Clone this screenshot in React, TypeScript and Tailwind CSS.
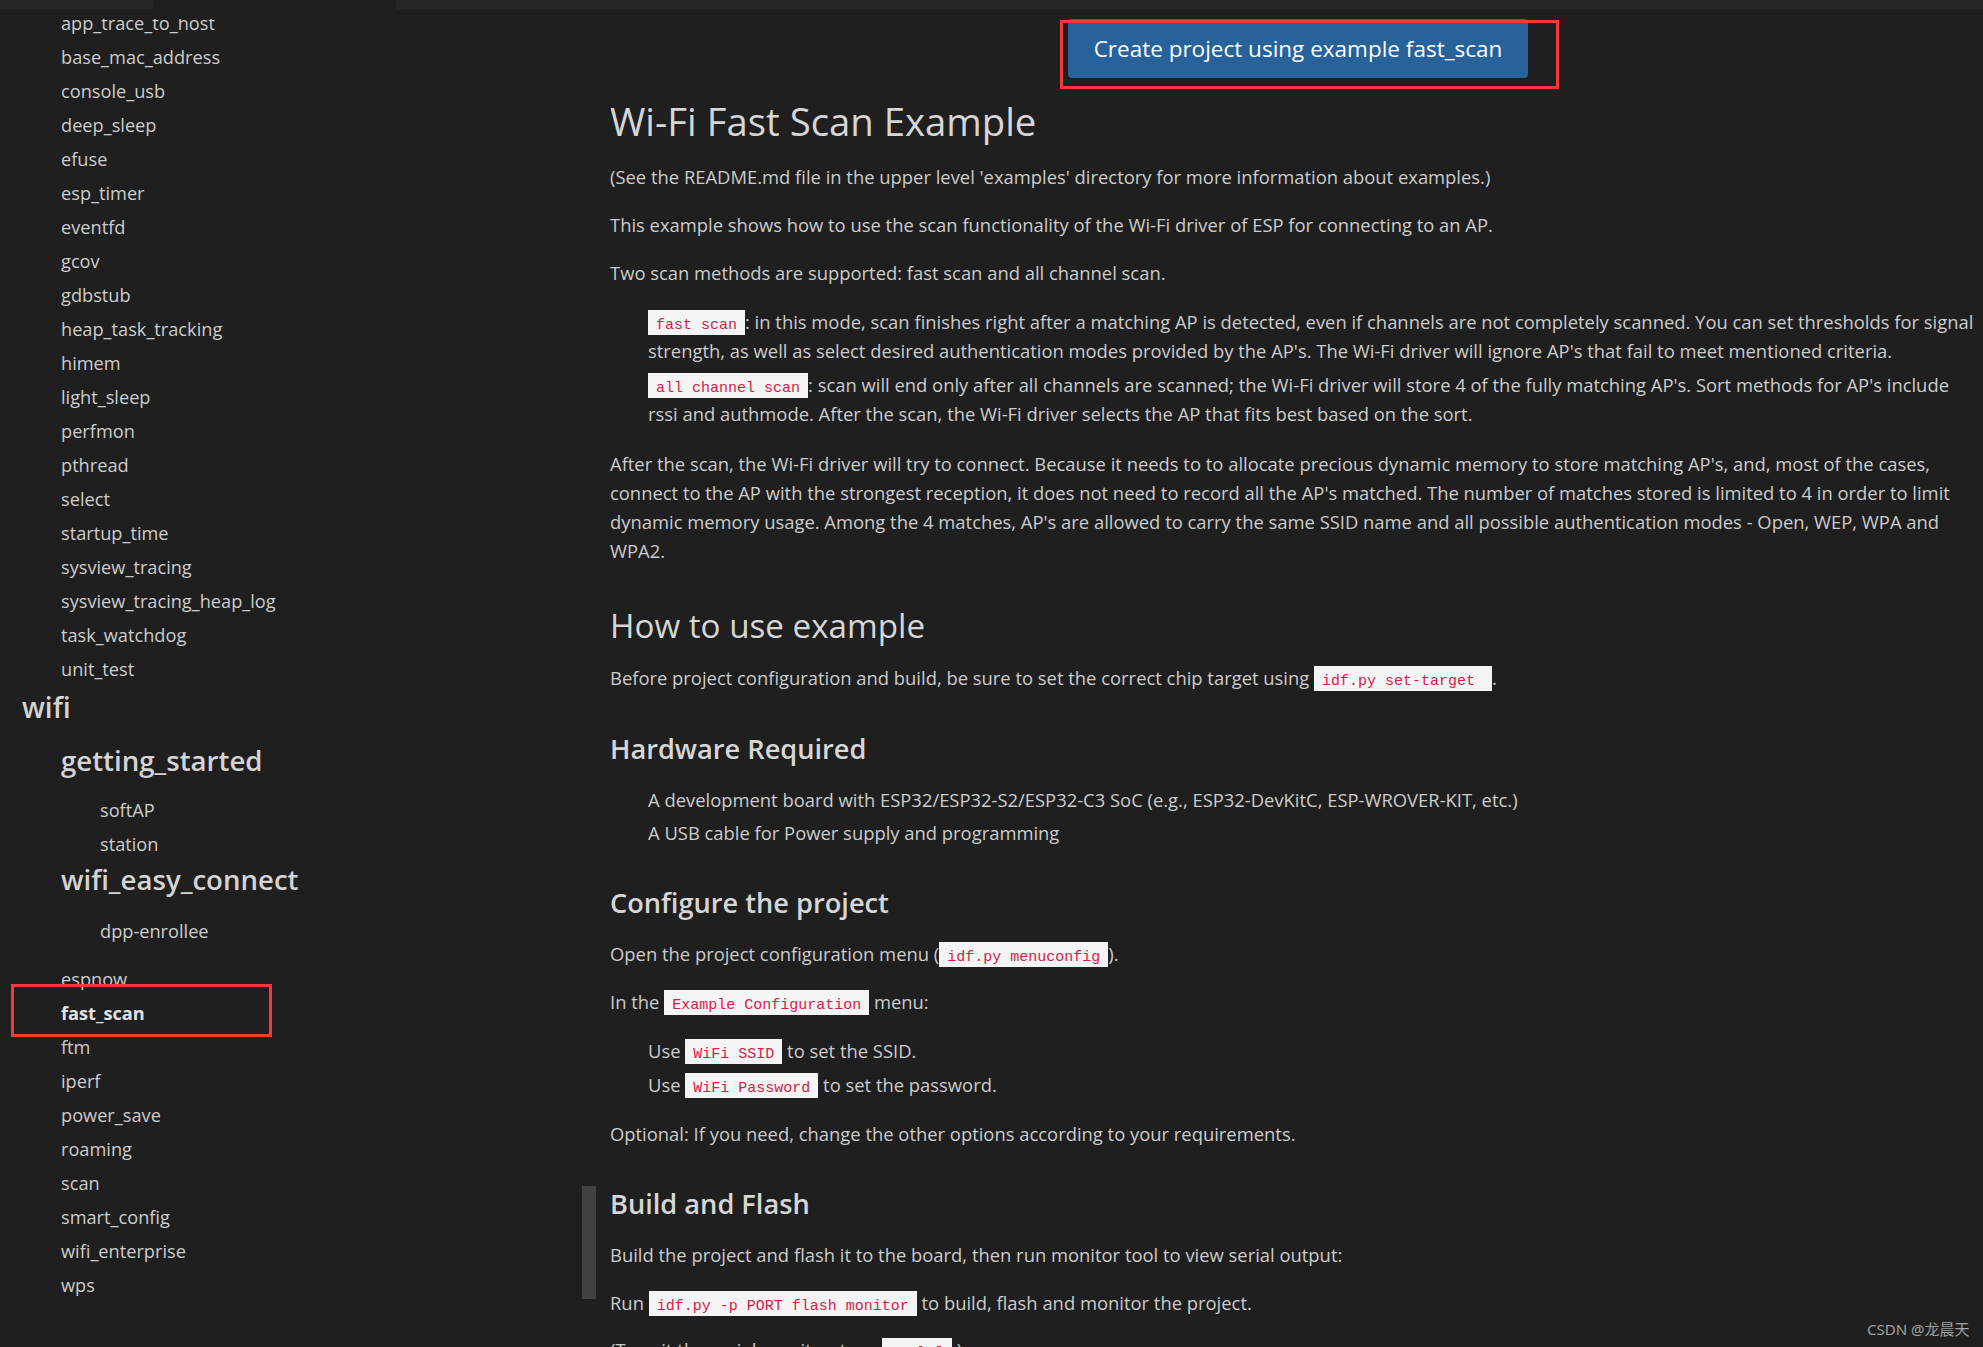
import type { ReactNode } from "react";

const topItems = [
  "app_trace_to_host",
  "base_mac_address",
  "console_usb",
  "deep_sleep",
  "efuse",
  "esp_timer",
  "eventfd",
  "gcov",
  "gdbstub",
  "heap_task_tracking",
  "himem",
  "light_sleep",
  "perfmon",
  "pthread",
  "select",
  "startup_time",
  "sysview_tracing",
  "sysview_tracing_heap_log",
  "task_watchdog",
  "unit_test",
];

const wifiItems = [
  "ftm",
  "iperf",
  "power_save",
  "roaming",
  "scan",
  "smart_config",
  "wifi_enterprise",
  "wps",
];

function Code({ children }: { children: ReactNode }) {
  return (
    <code className="bg-[#f4f4f4] px-2 pt-[7px] pb-[1px] font-['Liberation_Mono',monospace] text-[15px] leading-none text-[#d81b47]">
      {children}
    </code>
  );
}

function Item({ children, className = "" }: { children: ReactNode; className?: string }) {
  return <div className={`h-[34px] whitespace-nowrap text-[18.2px] leading-[34px] ${className}`}>{children}</div>;
}

function Sidebar() {
  const head = "whitespace-nowrap font-semibold text-[#d4d4d4]";
  return (
    <aside className="relative h-full w-[596px] shrink-0">
      {/* list is scrolled: the first row is cut by the top edge */}
      <div className="mt-[10px] h-[1328px] overflow-hidden">
        <div className="-mt-[13px]">
          {topItems.map((name) => (
            <Item key={name} className="pl-[61px]">
              {name}
            </Item>
          ))}
          <div className={`mt-[1px] pl-[22px] text-[28px] leading-[40px] ${head}`}>wifi</div>
          <div className={`mt-[16px] pl-[61px] text-[27.6px] leading-[34px] ${head}`}>getting_started</div>
          <Item className="mt-[16px] pl-[100px]">softAP</Item>
          <Item className="pl-[100px]">station</Item>
          <div className={`mt-[1px] pl-[61px] text-[27.6px] leading-[34px] ${head}`}>wifi_easy_connect</div>
          <Item className="mt-[18px] pl-[100px]">dpp-enrollee</Item>
          <Item className="mt-[14px] pl-[61px]">espnow</Item>
          <Item className="pl-[61px] font-bold text-[#e2e2e2]">fast_scan</Item>
          {wifiItems.map((name) => (
            <Item key={name} className="pl-[61px]">
              {name}
            </Item>
          ))}
        </div>
      </div>
      {/* scrollbar thumb */}
      <div className="absolute left-[582px] top-[1177px] h-[113px] w-[14px] bg-[#424242]" />
    </aside>
  );
}

function Content() {
  const p = "whitespace-nowrap text-[18.4px] leading-[29px]";
  const h3 = "text-[27.2px] leading-[34px] font-semibold text-[#d6d6d6]";
  return (
    <main className="w-[1390px] shrink-0 pl-[14px]">
      <div className="w-[1376px]">
        <div className="flex justify-center pt-[10px]">
          <button className="flex h-[59px] items-center rounded-[4px] bg-[#27629b] px-[26px] text-[22.5px] text-white">
            Create project using example fast_scan
          </button>
        </div>

        <h1 className="mt-[19px] text-[38.3px] leading-[48px] text-[#d6d6d6]">Wi-Fi Fast Scan Example</h1>
        <p className={`mt-[17px] ${p}`}>
          (See the README.md file in the upper level 'examples' directory for more information about examples.)
        </p>
        <p className={`mt-[19px] ${p}`}>
          This example shows how to use the scan functionality of the Wi-Fi driver of ESP for connecting to an AP.
        </p>
        <p className={`mt-[19px] ${p}`}>Two scan methods are supported: fast scan and all channel scan.</p>

        <ul className="mt-[20px] pl-[38px]">
          <li className={p}>
            <Code>fast scan</Code>: in this mode, scan finishes right after a matching AP is detected, even if channels
            are not completely scanned. You can set thresholds for signal
            <br />
            strength, as well as select desired authentication modes provided by the AP's. The Wi-Fi driver will ignore
            AP's that fail to meet mentioned criteria.
          </li>
          <li className={`mt-[5px] ${p}`}>
            <Code>all channel scan</Code>: scan will end only after all channels are scanned; the Wi-Fi driver will
            store 4 of the fully matching AP's. Sort methods for AP's include
            <br />
            rssi and authmode. After the scan, the Wi-Fi driver selects the AP that fits best based on the sort.
          </li>
        </ul>

        <p className={`mt-[21px] ${p}`}>
          After the scan, the Wi-Fi driver will try to connect. Because it needs to to allocate precious dynamic memory
          to store matching AP's, and, most of the cases,
          <br />
          connect to the AP with the strongest reception, it does not need to record all the AP's matched. The number
          of matches stored is limited to 4 in order to limit
          <br />
          dynamic memory usage. Among the 4 matches, AP's are allowed to carry the same SSID name and all possible
          authentication modes - Open, WEP, WPA and
          <br />
          WPA2.
        </p>

        <h2 className="mt-[40px] text-[33.2px] leading-[42px] text-[#d6d6d6]">How to use example</h2>
        <p className={`mt-[16px] ${p}`}>
          Before project configuration and build, be sure to set the correct chip target using{" "}
          <Code>idf.py set-target&nbsp;</Code>.
        </p>

        <h3 className={`mt-[40px] ${h3}`}>Hardware Required</h3>
        <ul className="mt-[19px] pl-[38px]">
          <li className={p}>
            A development board with ESP32/ESP32-S2/ESP32-C3 SoC (e.g., ESP32-DevKitC, ESP-WROVER-KIT, etc.)
          </li>
          <li className={`mt-[4px] ${p}`}>A USB cable for Power supply and programming</li>
        </ul>

        <h3 className={`mt-[39px] ${h3}`}>Configure the project</h3>
        <p className={`mt-[19px] ${p}`}>
          Open the project configuration menu (<Code>idf.py menuconfig</Code>).
        </p>
        <p className={`mt-[19px] ${p}`}>
          In the <Code>Example Configuration</Code> menu:
        </p>
        <ul className="mt-[20px] pl-[38px]">
          <li className={p}>
            Use <Code>WiFi SSID</Code> to set the SSID.
          </li>
          <li className={`mt-[5px] ${p}`}>
            Use <Code>WiFi Password</Code> to set the password.
          </li>
        </ul>
        <p className={`mt-[20px] ${p}`}>Optional: If you need, change the other options according to your requirements.</p>

        <h3 className={`mt-[39px] ${h3}`}>Build and Flash</h3>
        <p className={`mt-[19px] ${p}`}>
          Build the project and flash it to the board, then run monitor tool to view serial output:
        </p>
        <p className={`mt-[19px] ${p}`}>
          Run <Code>idf.py -p PORT flash monitor</Code> to build, flash and monitor the project.
        </p>
        <p className={`mt-[18px] ${p}`}>
          (To exit the serial monitor, type <Code>Ctrl-]</Code>.)
        </p>
      </div>
    </main>
  );
}

export default function App() {
  return (
    <div className="relative h-[1347px] w-[1983px] overflow-hidden bg-[#1f1f1f] font-['Open_Sans','Noto_Sans',sans-serif] text-[#cccccc]">
      <div className="flex h-[9px]">
        <div className="w-[153px] bg-[#262626]" />
        <div className="w-[243px]" />
        <div className="flex-1 bg-[#262626]" />
      </div>
      <div className="flex h-[1338px]">
        <Sidebar />
        <Content />
      </div>

      {/* annotation boxes */}
      <div className="pointer-events-none absolute left-[1060px] top-[20px] h-[69px] w-[499px] border-[3px] border-[#f23a3a]" />
      <div className="pointer-events-none absolute left-[11px] top-[984px] h-[53px] w-[261px] border-[3px] border-[#f23a3a]" />

      <div className="absolute left-[1867px] top-[1318px] font-['Noto_Sans','Noto_Sans_CJK_SC',sans-serif] text-[15px] text-[#a0a0a0]">
        CSDN @龙晨天
      </div>
    </div>
  );
}
